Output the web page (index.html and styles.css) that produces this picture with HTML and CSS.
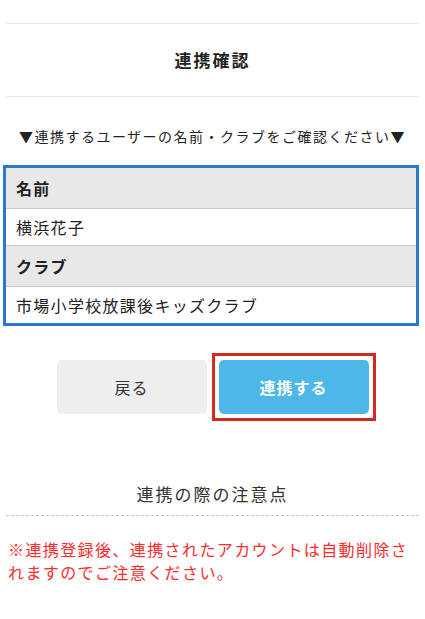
FILE: index.html
```html
<!DOCTYPE html>
<html lang="ja">
<head>
    <meta charset="UTF-8">
    <meta name="viewport" content="width=device-width, initial-scale=1.0">
    <title>連携確認</title>
    <link rel="stylesheet" href="styles.css">
</head>
<body>
    <div class="page">
        <div class="title-bar">
            <h1>連携確認</h1>
        </div>

        <p class="lead">▼連携するユーザーの名前・クラブをご確認ください▼</p>

        <div class="info">
            <div class="info-head">名前</div>
            <div class="info-value">横浜花子</div>
            <div class="info-head">クラブ</div>
            <div class="info-value">市場小学校放課後キッズクラブ</div>
        </div>

        <div class="actions">
            <button class="btn btn-back">戻る</button>
            <button class="btn btn-link">連携する</button>
        </div>

        <h2 class="notes-title">連携の際の注意点</h2>
        <p class="notes">※連携登録後、連携されたアカウントは自動削除されますのでご注意ください。</p>
    </div>
</body>
</html>
```

FILE: styles.css
```css
body {
    margin: 0;
    font-family: "Noto Sans CJK JP", "Noto Sans", sans-serif;
    color: #333;
    background: #fff;
}

.page {
    padding: 23px 6px 0;
}

.title-bar {
    border-top: 1px solid #e8e8e8;
    border-bottom: 1px solid #e8e8e8;
}

.title-bar h1 {
    margin: 0;
    height: 72px;
    line-height: 72px;
    text-align: center;
    font-size: 17px;
    font-weight: bold;
    letter-spacing: 2px;
    color: #222;
}

.lead {
    margin: 27px 0 0;
    line-height: 24px;
    text-align: center;
    font-size: 14px;
    letter-spacing: 1.5px;
    color: #222;
}

.info {
    margin: 17px 0 0 -3px;
    border: 3px solid #2b78d0;
}

.info-head,
.info-value {
    padding: 0 10px;
    font-size: 16px;
    letter-spacing: 1.3px;
    border-bottom: 1px solid #c8c8c8;
}

.info-head {
    height: 40px;
    line-height: 40px;
    background: #e8e8e8;
    font-weight: bold;
    color: #222;
}

.info-value {
    height: 36px;
    line-height: 36px;
    color: #222;
}

.info-value:last-child {
    border-bottom: none;
}

.actions {
    display: flex;
    justify-content: center;
    gap: 12px;
    margin-top: 34px;
}

.btn {
    width: 150px;
    height: 54px;
    border: none;
    border-radius: 5px;
    font-family: inherit;
    font-size: 16px;
    letter-spacing: 1px;
    cursor: pointer;
}

.btn-back {
    background: #eeeeee;
    color: #333;
}

.btn-link {
    position: relative;
    background: #4db8e8;
    color: #fff;
    font-weight: bold;
}

/* highlight frame drawn over the button */
.btn-link::after {
    content: "";
    position: absolute;
    top: -7px;
    right: -7px;
    bottom: -7px;
    left: -7px;
    border: 3px solid #d42a1e;
}

.notes-title {
    margin: 68px 0 0;
    padding-bottom: 9px;
    line-height: 24px;
    text-align: center;
    font-size: 17px;
    font-weight: normal;
    letter-spacing: 2px;
    color: #333;
    border-bottom: 1px dashed #c8c8c8;
}

.notes {
    margin: 22px 0 0;
    padding-left: 2px;
    line-height: 23px;
    font-size: 16px;
    letter-spacing: 1.4px;
    color: #ff2a2a;
}
```
